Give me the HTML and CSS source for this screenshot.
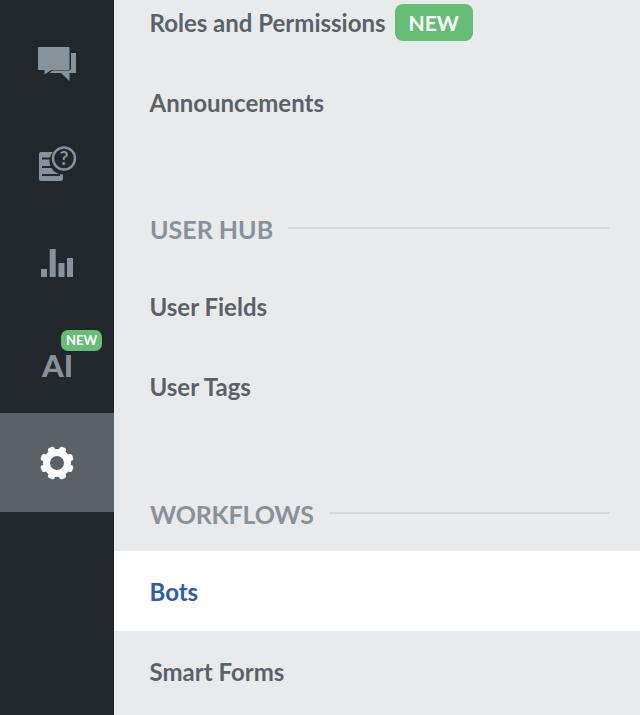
FILE: index.html
```html
<!DOCTYPE html>
<html lang="en">
<head>
<meta charset="utf-8">
<title>Admin settings</title>
<link rel="stylesheet" href="styles.css">
</head>
<body>
<div class="app">
  <nav class="rail">
    <a class="rail-item item-low">
      <svg class="icon" width="38" height="34" viewBox="0 0 38 34"><path fill="#87929a" d="M1 0h29.500a1 1 0 0 1 1 1v21a1 1 0 0 1-1 1H13.500L6.500 27.500V23H1a1 1 0 0 1-1-1V1a1 1 0 0 1 1-1z"/><path fill="#87929a" d="M33 6h5v20h-6.500v8l-8.500-8H11.500l3-2.500H31a2 2 0 0 0 2-2z"/></svg>
    </a>
    <a class="rail-item item-low item-doc">
      <svg class="icon" width="38" height="36" viewBox="0 0 38 36"><path fill="#87929a" d="M2 6h12a13.500 13.500 0 0 0 10 22.500V33a2 2 0 0 1-2 2H2a2 2 0 0 1-2-2V8a2 2 0 0 1 2-2z"/><path stroke="#22272b" stroke-width="2" d="M3 12.500h9.500M3 21h10M3 29h18"/><circle cx="25" cy="12.500" r="11" fill="none" stroke="#87929a" stroke-width="2.400"/><text x="25" y="19" class="q">?</text></svg>
    </a>
    <a class="rail-item">
      <svg class="icon" width="32" height="28" viewBox="0 0 32 28"><path fill="#87929a" d="M0 20h6v8H0zM8.700 0h6v28h-6zM17.500 14h6v14h-6zM26 9h6v19h-6z"/></svg>
    </a>
    <a class="rail-item ai">
      <span class="ai-label">AI</span>
      <span class="badge-small">NEW</span>
    </a>
    <a class="rail-item active">
      <svg class="icon" width="36" height="36" viewBox="-18 -18 36 36">
        <circle r="10.500" fill="none" stroke="#fff" stroke-width="7"/>
        <g fill="#fff">
          <rect x="-3.500" y="-17" width="7" height="7" rx="2.500" transform="rotate(22.500)"/>
          <rect x="-3.500" y="-17" width="7" height="7" rx="2.500" transform="rotate(67.500)"/>
          <rect x="-3.500" y="-17" width="7" height="7" rx="2.500" transform="rotate(112.500)"/>
          <rect x="-3.500" y="-17" width="7" height="7" rx="2.500" transform="rotate(157.500)"/>
          <rect x="-3.500" y="-17" width="7" height="7" rx="2.500" transform="rotate(202.500)"/>
          <rect x="-3.500" y="-17" width="7" height="7" rx="2.500" transform="rotate(247.500)"/>
          <rect x="-3.500" y="-17" width="7" height="7" rx="2.500" transform="rotate(292.500)"/>
          <rect x="-3.500" y="-17" width="7" height="7" rx="2.500" transform="rotate(337.500)"/>
        </g>
      </svg>
    </a>
  </nav>
  <main class="menu">
    <ul class="group">
      <li class="row"><a>Roles and Permissions</a><span class="badge">NEW</span></li>
      <li class="row"><a>Announcements</a></li>
    </ul>
    <div class="section"><h2>USER HUB</h2><span class="line"></span></div>
    <ul class="group">
      <li class="row"><a>User Fields</a></li>
      <li class="row"><a>User Tags</a></li>
    </ul>
    <div class="section section-last"><h2>WORKFLOWS</h2><span class="line"></span></div>
    <ul class="group group-last">
      <li class="row selected"><a>Bots</a></li>
      <li class="row"><a>Smart Forms</a></li>
    </ul>
  </main>
</div>
</body>
</html>
```
FILE: styles.css
```css
html, body {
  margin: 0;
  height: 100%;
  overflow: hidden;
}
body {
  font-family: Lato, "Liberation Sans", sans-serif;
  background: #e9eaec;
}
.app {
  display: flex;
  height: 715px;
  overflow: hidden;
}
.rail {
  flex: 0 0 114px;
  width: 114px;
  background: #22272b;
  padding-top: 13px;
  box-sizing: border-box;
}
.rail-item {
  display: flex;
  align-items: center;
  justify-content: center;
  height: 100px;
  position: relative;
  box-sizing: border-box;
}
.rail-item.active {
  background: #5a6269;
  height: 99px;
}
.item-low {
  padding-top: 2px;
}
.item-doc {
  padding-left: 1px;
}
.q {
  font: 700 19px Lato, sans-serif;
  fill: #87929a;
  text-anchor: middle;
}
.ai-label {
  font-size: 31px;
  font-weight: 900;
  color: #87929a;
  line-height: 1;
  margin: 4px 0 0 1px;
}
.badge-small {
  position: absolute;
  left: 61px;
  top: 17px;
  width: 41px;
  height: 21px;
  border-radius: 7px;
  background: #65bd76;
  color: #fff;
  font-size: 13px;
  font-weight: 700;
  line-height: 21px;
  text-align: center;
}
.menu {
  flex: 1;
  margin-top: -17px;
  min-width: 0;
}
.group {
  list-style: none;
  margin: 0;
  padding: 0;
}
.row {
  display: flex;
  align-items: center;
  gap: 9px;
  height: 80px;
  padding-left: 35.500px;
  padding-bottom: 2px;
  box-sizing: border-box;
  color: #5a6269;
  font-size: 24px;
  font-weight: 700;
}
.group-last .row {
  padding-bottom: 0;
}
.row.selected {
  background: #fff;
  color: #2f5da6;
}
.badge {
  background: #65bd76;
  color: #fff;
  border-radius: 8px;
  height: 37px;
  line-height: 37px;
  padding: 0 14px;
  font-size: 21px;
  font-weight: 700;
}
.section {
  display: flex;
  align-items: center;
  gap: 15px;
  height: 124px;
  padding: 48px 30px 0 36px;
  box-sizing: border-box;
  line-height: 30px;
}
.section-last {
  padding-top: 50px;
}
.section h2 {
  margin: 0;
  color: #87929a;
  font-size: 25px;
  font-weight: 700;
  white-space: nowrap;
}
.section-last h2 {
  letter-spacing: -0.2px;
}
.line {
  flex: 1;
  height: 2px;
  margin-top: -2px;
  background: #d6d9dc;
}
```
